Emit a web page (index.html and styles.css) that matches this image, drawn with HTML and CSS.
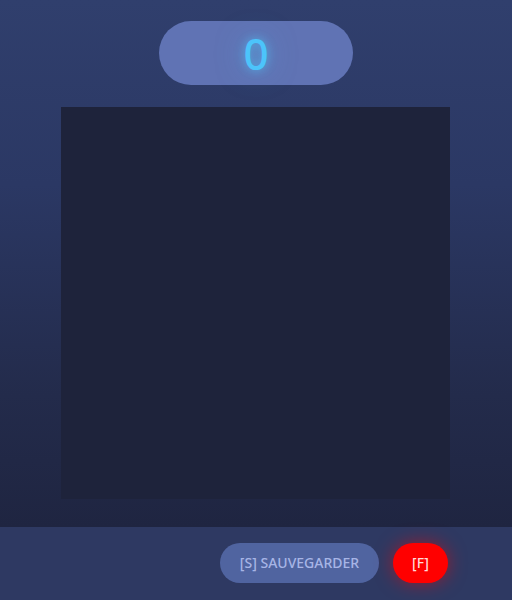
FILE: index.html
```html
<!DOCTYPE html>
<html lang="fr">
<head>
<meta charset="utf-8">
<link rel="stylesheet" href="styles.css">
</head>
<body>
<div class="app">
  <main class="stage">
    <div class="score"><span class="score-value">0</span></div>
    <div class="board"></div>
  </main>
  <footer class="bar">
    <button class="btn btn-save">[S] SAUVEGARDER</button>
    <button class="btn btn-f">[F]</button>
  </footer>
</div>
</body>
</html>
```
FILE: styles.css
```css
html, body {
  margin: 0;
  padding: 0;
  width: 512px;
  height: 600px;
  overflow: hidden;
}
body {
  font-family: "Open Sans", "Noto Sans", sans-serif;
  background: #1f2540;
}
.app {
  display: flex;
  flex-direction: column;
  height: 600px;
}
.stage {
  flex: 1;
  display: flex;
  flex-direction: column;
  align-items: center;
  padding-top: 21px;
  gap: 22px;
  background: linear-gradient(to bottom, #303f6d 0%, #2b3864 35%, #232b4b 75%, #1f2541 100%);
}
.score {
  width: 194px;
  height: 64px;
  border-radius: 32px;
  background: #6073b4;
  display: flex;
  align-items: center;
  justify-content: center;
}
.score-value {
  font-family: "Noto Sans", "Open Sans", sans-serif;
  font-size: 44px;
  font-weight: 500;
  color: #4cc4fb;
  line-height: 1;
  text-shadow: 0 0 10px rgba(79, 195, 247, 0.8), 0 0 28px rgba(79, 195, 247, 0.5);
}
.board {
  width: 389px;
  height: 392px;
  margin-right: 1px;
  background: #1e233b;
}
.bar {
  height: 73px;
  flex: none;
  background: #2e3962;
  display: flex;
  align-items: flex-start;
  justify-content: flex-end;
  gap: 14px;
  padding: 16px 64px 0 0;
  box-sizing: border-box;
}
.btn {
  border: none;
  height: 40px;
  border-radius: 20px;
  font-family: "Noto Sans", "Open Sans", sans-serif;
  font-size: 14px;
  font-weight: 500;
  padding: 0 0 2px;
  cursor: pointer;
}
.btn-save {
  width: 159px;
  background: #5064a0;
  color: #a7b5e6;
}
.btn-f {
  width: 55px;
  background: #ff0000;
  color: #ffd9d9;
  box-shadow: 0 0 18px rgba(255, 0, 0, 0.5);
}
```
